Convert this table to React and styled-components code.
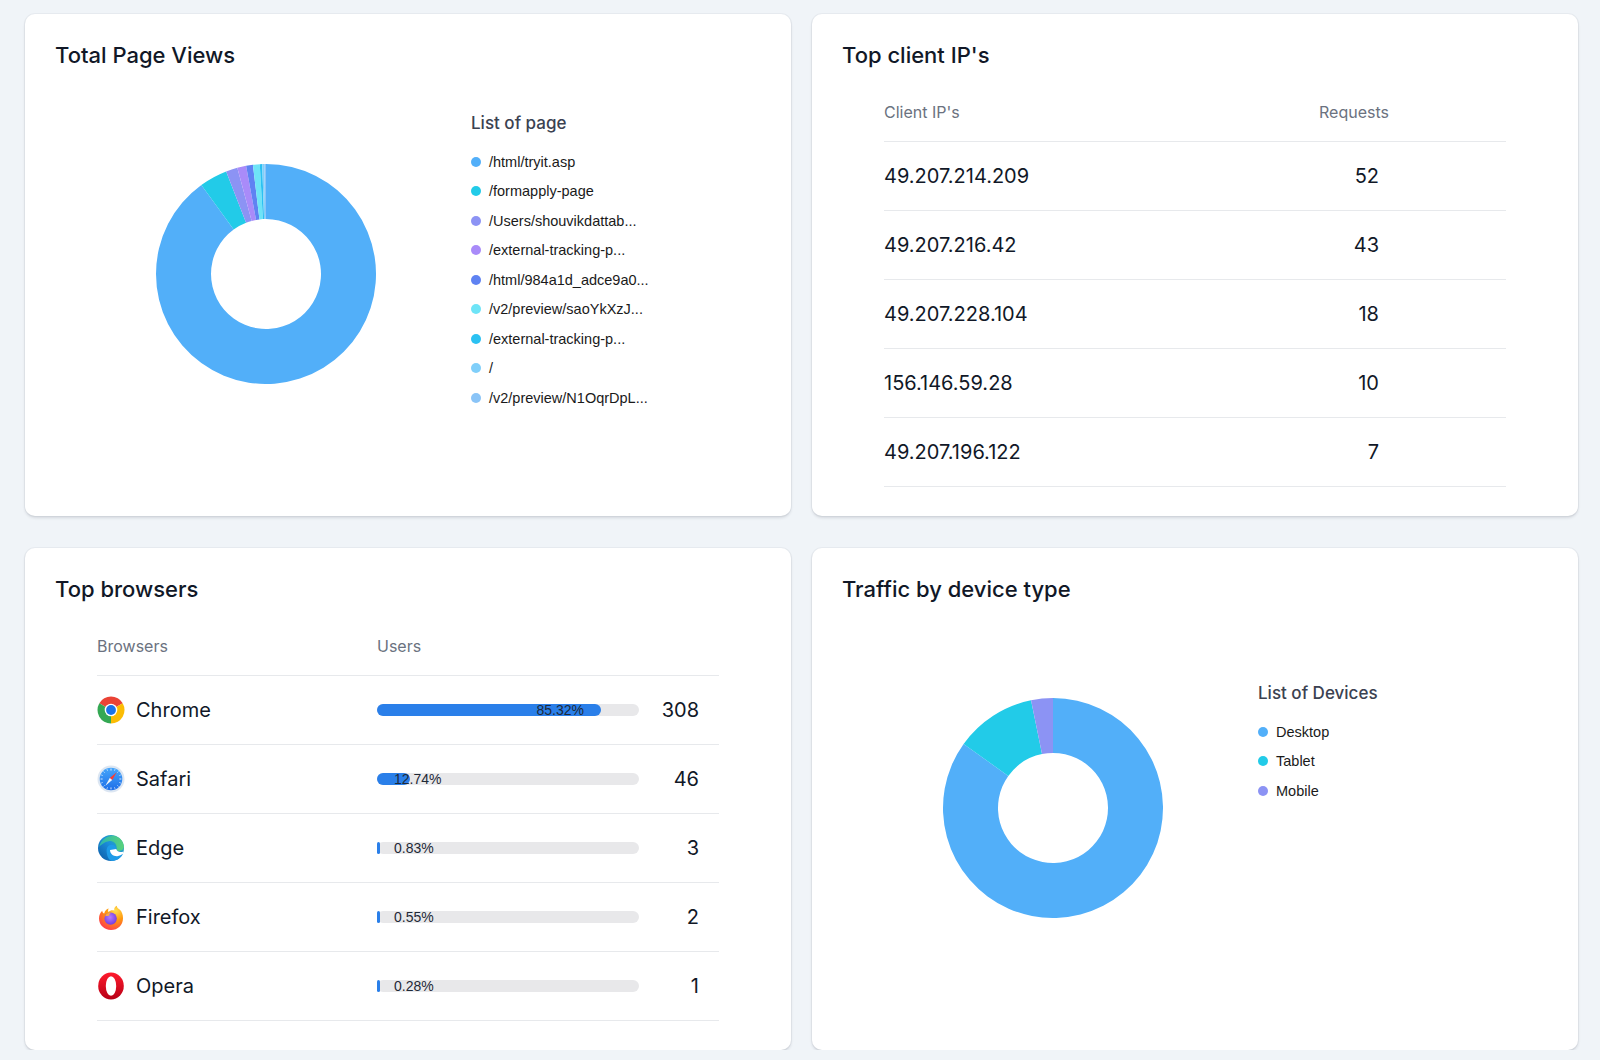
import React from 'react';
import styled, { createGlobalStyle } from 'styled-components';

const GlobalStyle = createGlobalStyle`
  body {
    margin: 0;
    background: #f0f4f8;
    font-family: Inter, 'Noto Sans', sans-serif;
    color: #111827;
  }
`;

const Dashboard = styled.div`
  display: grid;
  grid-template-columns: repeat(2, 766px);
  grid-auto-rows: 502px;
  column-gap: 21px;
  row-gap: 32px;
  padding: 14px 0 0 25px;
`;

const Card = styled.section`
  display: flex;
  flex-direction: column;
  background: #fff;
  border-radius: 10px;
  box-shadow: 0 0 0 1px rgba(15, 23, 42, 0.04), 0 2px 3px rgba(15, 23, 42, 0.12);
  padding: 27px 30px;
  box-sizing: border-box;
`;

const CardTitle = styled.h2`
  margin: 0;
  font-size: 22px;
  line-height: 28px;
  font-weight: 500;
  color: #111827;
`;

const ChartBody = styled.div`
  display: flex;
  align-items: flex-start;
`;

const DonutWrap = styled.div`
  flex-shrink: 0;
  width: 220px;
  height: 220px;
  margin: 95px 0 0 101px;
`;

const Legend = styled.div`
  margin-left: 95px;
  margin-top: ${(p) => p.$top}px;
`;

const LegendTitle = styled.div`
  font-size: 17px;
  line-height: 22px;
  font-weight: 500;
  color: #3b4251;
`;

const LegendList = styled.ul`
  list-style: none;
  margin: 13px 0 0;
  padding: 0;
`;

const LegendItem = styled.li`
  display: flex;
  align-items: center;
  height: 29.5px;
  font-family: 'Liberation Sans', Arial, sans-serif;
  font-size: 14.5px;
  color: #1a1a1a;
`;

const Dot = styled.span`
  width: 10px;
  height: 10px;
  border-radius: 50%;
  margin-right: 8px;
  background: ${(p) => p.$color};
`;

const Table = styled.div`
  margin: 33px 42px 0;
`;

const HeaderRow = styled.div`
  display: grid;
  grid-template-columns: ${(p) => p.$cols};
  padding-bottom: 19px;
  border-bottom: 1px solid #e7e9ec;
  font-size: 16px;
  line-height: 20px;
  color: #6b7280;
`;

const Row = styled.div`
  display: grid;
  grid-template-columns: ${(p) => p.$cols};
  align-items: center;
  height: 68px;
  border-bottom: 1px solid #e7e9ec;
  font-size: 20px;
  line-height: 20px;
  color: #111827;
`;

const Cell = styled.div`
  text-align: ${(p) => (p.$right ? 'right' : 'left')};
  padding-right: ${(p) => p.$pad || 0}px;
`;

const BrowserCell = styled.div`
  display: flex;
  align-items: center;
  gap: 11px;
`;

const BarTrack = styled.div`
  position: relative;
  height: 12px;
  border-radius: 6px;
  background: #e8e8ea;
`;

const BarFill = styled.div`
  height: 100%;
  min-width: 3px;
  border-radius: 6px;
  background: #2a7fe9;
`;

const BarLabel = styled.span`
  position: absolute;
  top: 50%;
  transform: translateY(-50%);
  font-family: 'Liberation Sans', Arial, sans-serif;
  font-size: 14px;
  line-height: 16px;
  color: #1f2937;
  white-space: nowrap;
`;

const pages = [
  { label: '/html/tryit.asp', value: 90, color: '#52aff9' },
  { label: '/formapply-page', value: 4.1, color: '#22cbe8' },
  { label: '/Users/shouvikdattab...', value: 1.7, color: '#8c93f4' },
  { label: '/external-tracking-p...', value: 1.3, color: '#a98bf9' },
  { label: '/html/984a1d_adce9a0...', value: 1.0, color: '#5f82f2' },
  { label: '/v2/preview/saoYkXzJ...', value: 1.0, color: '#6ee4f7' },
  { label: '/external-tracking-p...', value: 0.35, color: '#2bc1f2' },
  { label: '/', value: 0.3, color: '#80cffa' },
  { label: '/v2/preview/N1OqrDpL...', value: 0.25, color: '#8ac4f7' },
];

const devices = [
  { label: 'Desktop', value: 84.9, color: '#52aff9' },
  { label: 'Tablet', value: 11.9, color: '#22cbe8' },
  { label: 'Mobile', value: 3.2, color: '#8c93f4' },
];

const clients = [
  ['49.207.214.209', 52],
  ['49.207.216.42', 43],
  ['49.207.228.104', 18],
  ['156.146.59.28', 10],
  ['49.207.196.122', 7],
];

// angles are clockwise from 12 o'clock
function sector(cx, cy, r0, r1, a0, a1) {
  const pt = (r, a) => {
    const rad = (a * Math.PI) / 180;
    return `${(cx + r * Math.sin(rad)).toFixed(3)} ${(cy - r * Math.cos(rad)).toFixed(3)}`;
  };
  const large = a1 - a0 > 180 ? 1 : 0;
  if (r0 === 0) {
    return `M${cx} ${cy} L${pt(r1, a0)} A${r1} ${r1} 0 ${large} 1 ${pt(r1, a1)} Z`;
  }
  return `M${pt(r1, a0)} A${r1} ${r1} 0 ${large} 1 ${pt(r1, a1)} L${pt(r0, a1)} A${r0} ${r0} 0 ${large} 0 ${pt(r0, a0)} Z`;
}

const Donut = ({ data }) => {
  const total = data.reduce((s, d) => s + d.value, 0);
  let start = 0;
  return (
    <DonutWrap>
      <svg width="220" height="220" viewBox="0 0 220 220">
        {data.map((d, i) => {
          const end = start + (d.value / total) * 360;
          const path = sector(110, 110, 55, 110, start, end);
          start = end;
          return <path key={i} d={path} fill={d.color} />;
        })}
      </svg>
    </DonutWrap>
  );
};

const ChartCard = ({ title, legendTitle, data, legendTop }) => (
  <Card>
    <CardTitle>{title}</CardTitle>
    <ChartBody>
      <Donut data={data} />
      <Legend $top={legendTop}>
        <LegendTitle>{legendTitle}</LegendTitle>
        <LegendList>
          {data.map((d, i) => (
            <LegendItem key={i}>
              <Dot $color={d.color} />
              {d.label}
            </LegendItem>
          ))}
        </LegendList>
      </Legend>
    </ChartBody>
  </Card>
);

const ChromeIcon = () => (
  <svg width="28" height="28" viewBox="0 0 28 28">
    <path d={sector(14, 14, 0, 13.5, 300, 420)} fill="#ea4335" />
    <path d={sector(14, 14, 0, 13.5, 60, 180)} fill="#fbbc04" />
    <path d={sector(14, 14, 0, 13.5, 180, 300)} fill="#34a853" />
    <circle cx="14" cy="14" r="6.3" fill="#fff" />
    <circle cx="14" cy="14" r="4.9" fill="#1a73e8" />
  </svg>
);

const SafariIcon = () => {
  const ticks = Array.from({ length: 16 }, (_, i) => i * 22.5);
  return (
    <svg width="28" height="28" viewBox="0 0 28 28">
      <defs>
        <linearGradient id="safariG" x1="0" y1="0" x2="0" y2="1">
          <stop offset="0" stopColor="#46a6fb" />
          <stop offset="1" stopColor="#1d6ee8" />
        </linearGradient>
      </defs>
      <circle cx="14" cy="14" r="13.5" fill="#dce6f2" />
      <circle cx="14" cy="14" r="11.3" fill="url(#safariG)" />
      {ticks.map((a) => (
        <line
          key={a}
          x1="14"
          y1="3.6"
          x2="14"
          y2={a % 90 === 0 ? 5.6 : 4.8}
          stroke="#fff"
          strokeWidth="0.8"
          transform={`rotate(${a} 14 14)`}
        />
      ))}
      <g transform="rotate(40 14 14)">
        <polygon points="14,5.2 15.6,14 12.4,14" fill="#ff3b30" />
        <polygon points="14,22.8 12.4,14 15.6,14" fill="#f4f6f8" />
      </g>
    </svg>
  );
};

const EdgeIcon = () => (
  <svg width="28" height="28" viewBox="0 0 28 28">
    <defs>
      <linearGradient id="edgeA" x1="0" y1="1" x2="1" y2="0">
        <stop offset="0" stopColor="#0c59a4" />
        <stop offset="0.55" stopColor="#1b8fdc" />
        <stop offset="1" stopColor="#35c58f" />
      </linearGradient>
      <linearGradient id="edgeB" x1="0" y1="0" x2="1" y2="0">
        <stop offset="0" stopColor="#2cb6b0" />
        <stop offset="1" stopColor="#5ad27a" />
      </linearGradient>
    </defs>
    <circle cx="14" cy="14" r="13" fill="url(#edgeA)" />
    <path d="M2.2 12.6 C4 5.4 10 1.6 16.4 1.9 C22.6 2.3 26.6 7.6 26.8 12.6 C26.9 15.4 24.8 17 22.2 17 C19.4 17 19.8 14.6 19.6 13 C19 8.6 15.4 6.6 11.6 7.2 C7.4 7.9 4.6 10.4 2.2 12.6 Z" fill="url(#edgeB)" />
    <path d="M9.6 15.8 C9.8 12.2 12.6 10.4 15.4 10.8 C17.8 11.2 19 13 19.2 15 L13 16 C13 19.8 16.4 22.6 20.4 22.2 C22.6 22 24.6 21 26 19.8 C24 24.4 19.2 27.2 14.6 26.8 C11.2 26.4 9.4 20 9.6 15.8 Z" fill="#1e9be8" />
    <path d="M13 16 L19.2 15 C20 17.8 23.4 18.6 26.4 17.4 L26 19.8 C24.6 21 22.6 22 20.4 22.2 C16.4 22.6 13 19.8 13 16 Z" fill="#fff" />
  </svg>
);

const FirefoxIcon = () => (
  <svg width="28" height="28" viewBox="0 0 28 28">
    <defs>
      <radialGradient id="ffA" cx="0.7" cy="0.2" r="0.9">
        <stop offset="0" stopColor="#ffde4f" />
        <stop offset="0.45" stopColor="#ff980e" />
        <stop offset="1" stopColor="#ff3750" />
      </radialGradient>
      <radialGradient id="ffB" cx="0.45" cy="0.4" r="0.7">
        <stop offset="0" stopColor="#b57bff" />
        <stop offset="1" stopColor="#6a32d9" />
      </radialGradient>
    </defs>
    <path d="M14 27 C7.2 27 2 22 2 15.6 C2 12.2 3.4 9.4 5.2 7.8 C5.4 9.6 6.4 10.4 7.2 10.6 C7.6 7.8 9.6 5.8 11.8 5.4 C10.8 6.8 11 8.2 11.6 9 C12.8 7.4 15.4 6.8 17.4 7.6 C16.6 5.6 18 3.4 19.8 2.8 C19.8 4.6 21.2 5.4 22.6 6.6 C24.8 8.4 26 11.6 26 15.2 C26 22 20.8 27 14 27 Z" fill="url(#ffA)" />
    <circle cx="13.6" cy="15.6" r="6.2" fill="url(#ffB)" />
    <path d="M8.4 13.2 C9 10.8 11.6 9.6 13.8 10.2 C12.2 10.6 11.8 12 12.6 12.8 C10.8 12.6 9.4 12.8 8.4 13.2 Z" fill="#ffb23a" />
  </svg>
);

const OperaIcon = () => (
  <svg width="28" height="28" viewBox="0 0 28 28">
    <defs>
      <linearGradient id="opA" x1="0" y1="0" x2="0" y2="1">
        <stop offset="0" stopColor="#ff1b2d" />
        <stop offset="1" stopColor="#b70016" />
      </linearGradient>
    </defs>
    <ellipse cx="14" cy="14" rx="12.8" ry="13.4" fill="url(#opA)" />
    <ellipse cx="14" cy="14" rx="5.2" ry="9.8" fill="#fff" />
  </svg>
);

const browsers = [
  { name: 'Chrome', icon: <ChromeIcon />, pct: 85.32, users: 308 },
  { name: 'Safari', icon: <SafariIcon />, pct: 12.74, users: 46 },
  { name: 'Edge', icon: <EdgeIcon />, pct: 0.83, users: 3 },
  { name: 'Firefox', icon: <FirefoxIcon />, pct: 0.55, users: 2 },
  { name: 'Opera', icon: <OperaIcon />, pct: 0.28, users: 1 },
];

const ipCols = '1fr 187px';
const browserCols = '280px 262px 1fr';

const ClientsCard = () => (
  <Card>
    <CardTitle>Top client IP's</CardTitle>
    <Table>
      <HeaderRow $cols={ipCols}>
        <Cell>Client IP's</Cell>
        <Cell>Requests</Cell>
      </HeaderRow>
      {clients.map(([ip, count]) => (
        <Row key={ip} $cols={ipCols}>
          <Cell>{ip}</Cell>
          <Cell $right $pad={127}>{count}</Cell>
        </Row>
      ))}
    </Table>
  </Card>
);

const BrowsersCard = () => (
  <Card>
    <CardTitle>Top browsers</CardTitle>
    <Table>
      <HeaderRow $cols={browserCols}>
        <Cell>Browsers</Cell>
        <Cell>Users</Cell>
        <Cell />
      </HeaderRow>
      {browsers.map((b) => (
        <Row key={b.name} $cols={browserCols}>
          <BrowserCell>
            {b.icon}
            {b.name}
          </BrowserCell>
          <BarTrack>
            <BarFill style={{ width: `${b.pct}%` }} />
            <BarLabel style={{ left: `max(17px, calc(${b.pct}% - 64px))` }}>{b.pct.toFixed(2)}%</BarLabel>
          </BarTrack>
          <Cell $right $pad={20}>{b.users}</Cell>
        </Row>
      ))}
    </Table>
  </Card>
);

const App = () => (
  <>
    <GlobalStyle />
    <Dashboard>
      <ChartCard title="Total Page Views" legendTitle="List of page" data={pages} legendTop={43} />
      <ClientsCard />
      <BrowsersCard />
      <ChartCard title="Traffic by device type" legendTitle="List of Devices" data={devices} legendTop={79} />
    </Dashboard>
  </>
);

export default App;
